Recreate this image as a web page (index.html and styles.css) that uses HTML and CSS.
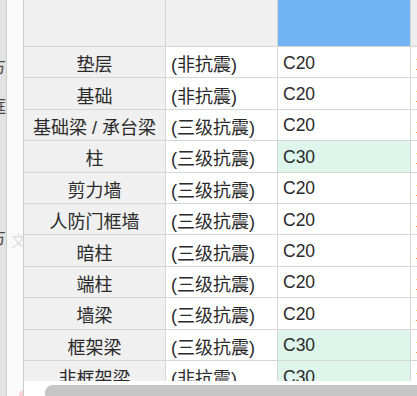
FILE: index.html
```html
<!DOCTYPE html>
<html lang="zh-CN">
<head>
<meta charset="utf-8">
<title>混凝土等级</title>
<link rel="stylesheet" href="styles.css">
</head>
<body>
<div class="page">
  <aside class="side">
    <div class="side-edge">
      <span class="frag frag-1">方</span>
      <span class="frag frag-2">框</span>
      <span class="frag frag-3">方</span>
    </div>
    <div class="side-pane">
      <span class="ghost">文</span>
    </div>
  </aside>
  <main class="main">
    <div class="viewport">
      <div class="grid">
        <div class="cell head c1"></div>
        <div class="cell head c2"></div>
        <div class="cell head c3 sel"></div>
        <div class="cell head c4"></div>

        <div class="cell c1">垫层</div><div class="cell c2">(非抗震)</div><div class="cell c3">C20</div><div class="cell c4">三级</div>
        <div class="cell c1">基础</div><div class="cell c2">(非抗震)</div><div class="cell c3">C20</div><div class="cell c4">三级</div>
        <div class="cell c1">基础梁 / 承台梁</div><div class="cell c2">(三级抗震)</div><div class="cell c3">C20</div><div class="cell c4">三级</div>
        <div class="cell c1">柱</div><div class="cell c2">(三级抗震)</div><div class="cell c3 hi">C30</div><div class="cell c4">三级</div>
        <div class="cell c1">剪力墙</div><div class="cell c2">(三级抗震)</div><div class="cell c3">C20</div><div class="cell c4">三级</div>
        <div class="cell c1">人防门框墙</div><div class="cell c2">(三级抗震)</div><div class="cell c3">C20</div><div class="cell c4">三级</div>
        <div class="cell c1">暗柱</div><div class="cell c2">(三级抗震)</div><div class="cell c3">C20</div><div class="cell c4">三级</div>
        <div class="cell c1">端柱</div><div class="cell c2">(三级抗震)</div><div class="cell c3">C20</div><div class="cell c4">三级</div>
        <div class="cell c1">墙梁</div><div class="cell c2">(三级抗震)</div><div class="cell c3">C20</div><div class="cell c4">三级</div>
        <div class="cell c1">框架梁</div><div class="cell c2">(三级抗震)</div><div class="cell c3 hi">C30</div><div class="cell c4">三级</div>
        <div class="cell c1">非框架梁</div><div class="cell c2">(非抗震)</div><div class="cell c3 hi">C30</div><div class="cell c4">三级</div>
      </div>
    </div>
    <div class="hscroll">
      <div class="thumb"></div>
    </div>
  </main>
</div>
</body>
</html>
```

FILE: styles.css
```css
html, body {
  margin: 0;
  padding: 0;
  background: #ffffff;
  overflow: hidden;
}

.page {
  display: flex;
  width: 417px;
  height: 396px;
  overflow: hidden;
  font-family: "Liberation Sans", "Noto Sans CJK SC", sans-serif;
  font-size: 18px;
  color: #2a2a2a;
}

.side {
  display: flex;
  width: 24px;
  flex: none;
}

.side-edge {
  position: relative;
  width: 6px;
  background: #e2e2e2;
  border-right: 1px solid #cfcfcf;
  overflow: hidden;
}

.frag {
  position: absolute;
  right: 0;
  font-size: 17px;
  line-height: 17px;
  color: #4a4a4a;
}

.frag-1 { top: 59px; }
.frag-2 { top: 99px; }
.frag-3 { top: 230px; }

.side-pane {
  position: relative;
  flex: 1;
  background: #fafafb;
  border-right: 1px solid #cccccc;
  overflow: hidden;
}

.side-pane::after {
  content: "";
  position: absolute;
  left: 12px;
  bottom: 0;
  width: 10px;
  height: 10px;
  border-radius: 50%;
  background: #f7d2d2;
  transform: translateY(4px);
}

.ghost {
  position: absolute;
  left: 4px;
  top: 229px;
  font-size: 15px;
  color: #dddddd;
}

.main {
  flex: 1;
  display: flex;
  flex-direction: column;
  min-width: 0;
}

.viewport {
  height: 381px;
  overflow: hidden;
  flex: none;
}

.grid {
  display: grid;
  grid-template-columns: 142px 112px 133px 40px;
  grid-template-rows: 47px repeat(11, 31.4px);
  width: 427px;
}

.cell {
  box-sizing: border-box;
  border-right: 1px solid #d6d6d6;
  border-bottom: 1px solid #d6d6d6;
  display: flex;
  align-items: center;
  white-space: nowrap;
  overflow: hidden;
  padding-top: 2px;
  background: #ffffff;
}

.c1 {
  background: #f0f0f0;
  justify-content: center;
}

.c2 {
  padding-left: 5px;
}

.c3 {
  padding-left: 5px;
  font-size: 17.5px;
}

.c4 {
  padding-left: 4px;
  color: #e89a45;
  font-size: 14px;
}

.head {
  background: #f0f0f0;
}

.head.sel {
  background: #70b4f4;
}

.head.c4 {
  background: #eeeeee;
}

.hi {
  background: #ddf5ea;
}

.hscroll {
  flex: 1;
  background: #ffffff;
  padding: 4px 0 0 21px;
}

.thumb {
  height: 16px;
  background: #c6c6c6;
  border-radius: 8px 0 0 8px;
}
```
